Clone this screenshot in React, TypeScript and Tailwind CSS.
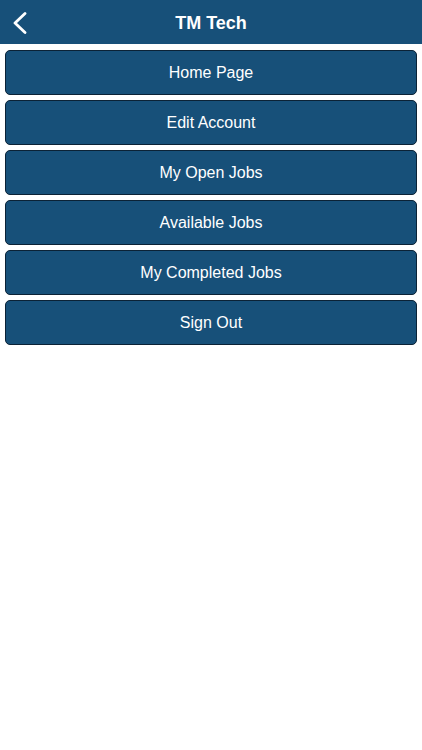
import React from "react";

const items = ["Home Page", "Edit Account", "My Open Jobs", "Available Jobs", "My Completed Jobs", "Sign Out"];

export default function App() {
  return (
    <div className="w-[422px] h-[750px] bg-white" style={{ fontFamily: '"Liberation Sans", Arial, sans-serif' }}>
      <div className="relative h-[44px] bg-[#175079] flex items-center justify-center">
        <svg className="absolute left-[12px] top-[12px]" width="16" height="22" viewBox="0 0 16 22" fill="none">
          <path d="M13 1.5 L3 11 L13 20.5" stroke="white" strokeWidth="2.8" strokeLinecap="round" strokeLinejoin="round" />
        </svg>
        <span className="text-white font-bold text-[18px] pt-[2px]">TM Tech</span>
      </div>
      <div className="flex flex-col gap-[5px] px-[5px] pt-[6px]">
        {items.map((t) => (
          <div key={t} className="h-[45px] rounded-[5px] border border-[#0b2236] bg-[#175079] flex items-center justify-center text-white text-[16px]">
            {t}
          </div>
        ))}
      </div>
    </div>
  );
}
